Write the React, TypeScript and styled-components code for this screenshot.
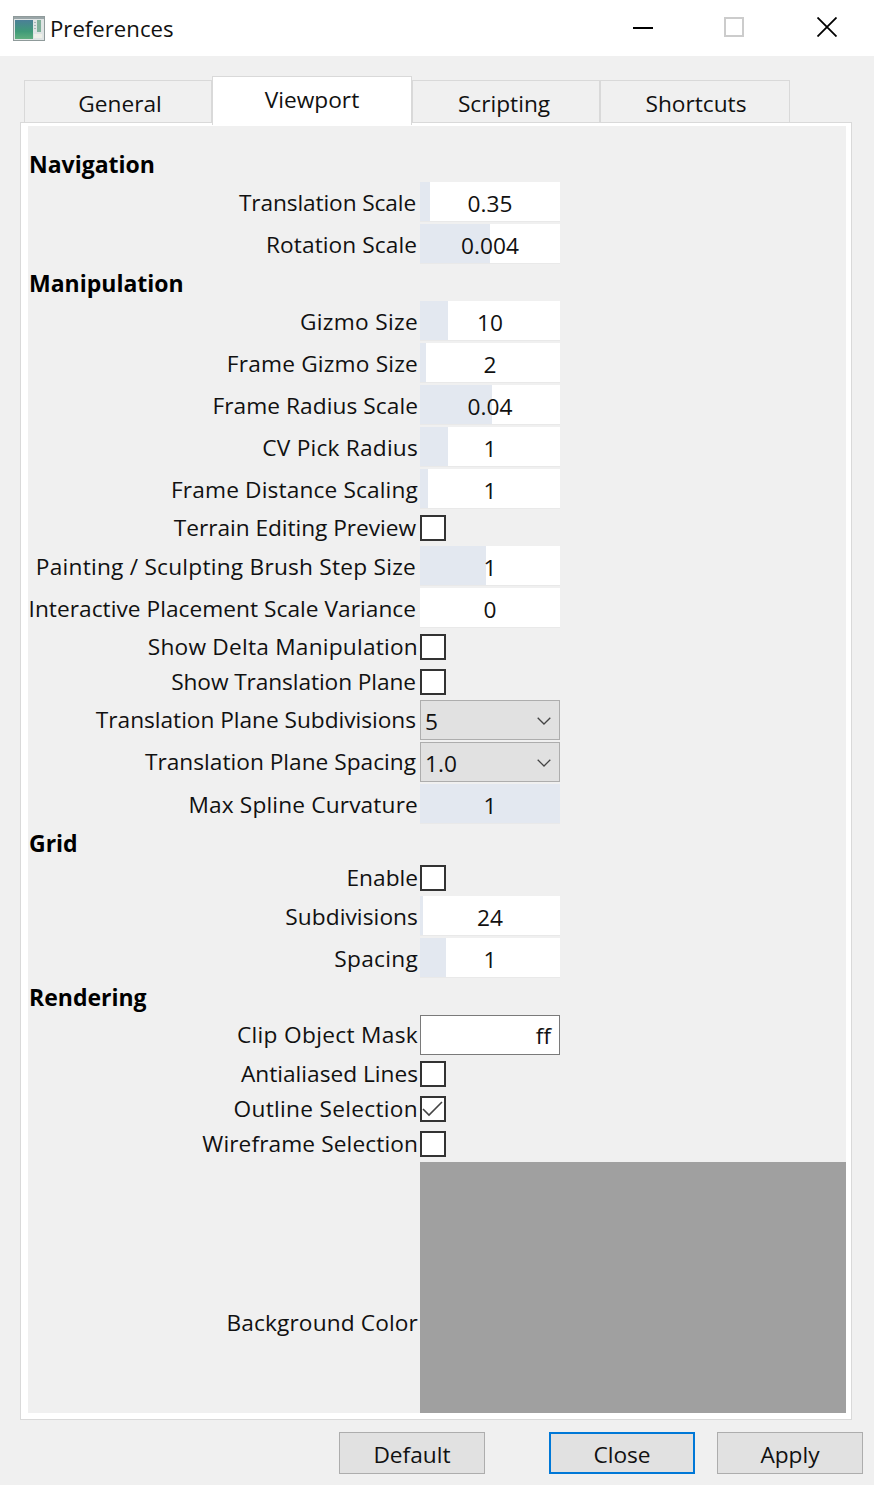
import React from "react";
import styled, { createGlobalStyle } from "styled-components";

const Global = createGlobalStyle`
  html, body { margin: 0; padding: 0; background: #f0f0f0; }
  #root { width: 874px; height: 1485px; overflow: hidden; }
  * { box-sizing: border-box; }
`;

const Window = styled.div`
  width: 874px;
  height: 1485px;
  display: flex;
  flex-direction: column;
  background: #f0f0f0;
  font-family: "Open Sans", "Noto Sans", sans-serif;
  font-size: 22.7px;
  color: #111;
`;

const TitleBar = styled.header`
  height: 56px;
  background: #fff;
  display: flex;
  align-items: center;
  padding-left: 13px;
  flex: none;
`;

const TitleText = styled.span`
  margin-left: 5px;
  font-size: 22.2px;
`;

const WindowControls = styled.div`
  margin-left: auto;
  display: flex;
  margin-right: 37px;
  gap: 71px;
  margin-top: -2px;
`;

const CloseSlot = styled.span`
  display: flex;
  margin-left: 2px;
`;

const TabBar = styled.nav`
  display: flex;
  align-items: flex-end;
  height: 46px;
  margin: 20px 0 0 24px;
  flex: none;
`;

const Tab = styled.div<{ $active?: boolean; $w: number; $shift?: number }>`
  width: ${(p) => p.$w}px;
  height: ${(p) => (p.$active ? 49 : 42)}px;
  margin-bottom: ${(p) => (p.$active ? -3 : 0)}px;
  background: ${(p) => (p.$active ? "#fff" : "#f0f0f0")};
  border: 1px solid #d9d9d9;
  border-bottom: none;
  display: flex;
  align-items: ${(p) => (p.$active ? "flex-start" : "center")};
  justify-content: center;
  padding-top: ${(p) => (p.$active ? 7 : 3)}px;
  padding-left: ${(p) => Math.max(p.$shift ?? 0, 0) * 2}px;
  padding-right: ${(p) => Math.max(-(p.$shift ?? 0), 0) * 2}px;
  position: relative;
  z-index: ${(p) => (p.$active ? 2 : 0)};
`;

const Pane = styled.section`
  margin: 0 22px 0 20px;
  height: 1298px;
  background: #fff;
  border: 1px solid #d9d9d9;
  padding: 3px 5px 6px 7px;
  flex: none;
`;

const Form = styled.div`
  height: 100%;
  background: #f0f0f0;
  padding-top: 21px;
  display: flex;
  flex-direction: column;
  gap: 2px;
`;

const Heading = styled.h3`
  height: 33px;
  margin: 0;
  padding: 2px 0 0 1px;
  font-size: 23px;
  font-weight: 700;
  line-height: 30px;
  color: #000;
`;

const Row = styled.div<{ $h: number }>`
  display: flex;
  align-items: center;
  height: ${(p) => p.$h}px;
  flex: none;
  gap: 2px;
`;

const Label = styled.label<{ $inset?: number; $drop: number; $track?: number }>`
  width: 390px;
  flex: none;
  white-space: nowrap;
  padding-right: ${(p) => p.$inset ?? 0}px;
  margin-top: ${(p) => p.$drop}px;
  letter-spacing: ${(p) => p.$track ?? 0}px;
  display: flex;
  justify-content: flex-end;
`;

const Field = styled.div<{ $fill: number }>`
  width: 140px;
  height: 40px;
  display: flex;
  align-items: center;
  justify-content: center;
  padding-top: 3px;
  border-bottom: 1px solid #e9e9e9;
  background: linear-gradient(
    to right,
    #e3e8f0 ${(p) => p.$fill}px,
    #fff ${(p) => p.$fill}px
  );
`;

const Check = styled.span`
  width: 26px;
  height: 26px;
  border: 2px solid #333;
  background: #fff;
  display: flex;
  align-items: center;
  justify-content: center;
`;

const Combo = styled.div`
  width: 140px;
  height: 40px;
  border: 1px solid #adadad;
  background: #e1e1e1;
  display: flex;
  align-items: center;
  justify-content: space-between;
  padding: 2px 8px 0 4px;
`;

const MaskInput = styled.div`
  width: 140px;
  height: 40px;
  border: 1px solid #7a7a7a;
  background: #fff;
  display: flex;
  align-items: center;
  justify-content: flex-end;
  padding: 0 8px 0 0;
`;

const Swatch = styled.div`
  flex: 1;
  height: 100%;
  background: #a0a0a0;
`;

const Footer = styled.footer`
  display: flex;
  padding: 12px 0 0 339px;
  flex: none;
`;

const Button = styled.button<{ $focused?: boolean; $gap: number }>`
  width: 146px;
  height: 42px;
  margin-left: ${(p) => p.$gap}px;
  background: #e1e1e1;
  border: ${(p) => (p.$focused ? "2px solid #0078d7" : "1px solid #adadad")};
  font: inherit;
  color: #111;
  padding: 2px 0 0;
`;

type Common = { label: string; inset?: number; track?: number };
type Item =
  | { kind: "heading"; text: string }
  | (Common & { kind: "field"; value: string; fill: number })
  | (Common & { kind: "check"; checked?: boolean })
  | (Common & { kind: "combo"; value: string })
  | (Common & { kind: "mask"; value: string })
  | (Common & { kind: "color" });

const items: Item[] = [
  { kind: "heading", text: "Navigation" },
  { kind: "field", label: "Translation Scale", value: "0.35", fill: 10, inset: 2, track: -0.12 },
  { kind: "field", label: "Rotation Scale", value: "0.004", fill: 70, inset: 1, track: 0.07 },
  { kind: "heading", text: "Manipulation" },
  { kind: "field", label: "Gizmo Size", value: "10", fill: 28, track: 0.3 },
  { kind: "field", label: "Frame Gizmo Size", value: "2", fill: 6, track: 0.19 },
  { kind: "field", label: "Frame Radius Scale", value: "0.04", fill: 72, track: 0.06 },
  { kind: "field", label: "CV Pick Radius", value: "1", fill: 28, track: 0.21 },
  { kind: "field", label: "Frame Distance Scaling", value: "1", fill: 8, track: 0.14 },
  { kind: "check", label: "Terrain Editing Preview", inset: 2, track: -0.04 },
  { kind: "field", label: "Painting / Sculpting Brush Step Size", value: "1", fill: 66, inset: 2, track: 0.23 },
  { kind: "field", label: "Interactive Placement Scale Variance", value: "0", fill: 0, inset: 2, track: 0.03 },
  { kind: "check", label: "Show Delta Manipulation", track: 0.22 },
  { kind: "check", label: "Show Translation Plane", inset: 2, track: -0.09 },
  { kind: "combo", label: "Translation Plane Subdivisions", value: "5", inset: 2, track: -0.03 },
  { kind: "combo", label: "Translation Plane Spacing", value: "1.0", inset: 2 },
  { kind: "field", label: "Max Spline Curvature", value: "1", fill: 140, track: 0.15 },
  { kind: "heading", text: "Grid" },
  { kind: "check", label: "Enable" },
  { kind: "field", label: "Subdivisions", value: "24", fill: 3, track: 0.08 },
  { kind: "field", label: "Spacing", value: "1", fill: 26, track: 0.28 },
  { kind: "heading", text: "Rendering" },
  { kind: "mask", label: "Clip Object Mask", value: "ff", track: 0.31 },
  { kind: "check", label: "Antialiased Lines" },
  { kind: "check", label: "Outline Selection", checked: true, track: 0.29 },
  { kind: "check", label: "Wireframe Selection", track: 0.1 },
  { kind: "color", label: "Background Color", track: 0.13 },
];

const AppIcon = () => (
  <svg width="32" height="25" viewBox="0 0 32 25">
    <rect x="0.5" y="0.5" width="31" height="24" fill="#dfe4e4" stroke="#8f9a9a" />
    <rect x="1" y="1" width="30" height="2" fill="#9aa6a8" />
    <defs>
      <linearGradient id="ic" x1="0" y1="0" x2="0" y2="1">
        <stop offset="0" stopColor="#4b7f97" />
        <stop offset="0.6" stopColor="#3f9a78" />
        <stop offset="1" stopColor="#5fae7e" />
      </linearGradient>
    </defs>
    <rect x="2" y="4" width="18" height="19" fill="url(#ic)" />
    <rect x="24" y="4" width="4" height="12" fill="#7fb09a" />
    <rect x="21" y="6" width="2" height="1" fill="#a9b6b6" />
    <rect x="21" y="9" width="2" height="1" fill="#a9b6b6" />
    <rect x="21" y="12" width="2" height="1" fill="#a9b6b6" />
    <rect x="21" y="18" width="8" height="4" fill="#eef0e8" />
  </svg>
);

const Minimize = () => (
  <svg width="20" height="20" viewBox="0 0 20 20">
    <rect x="0" y="10" width="20" height="2" fill="#000" />
  </svg>
);
const Maximize = () => (
  <svg width="20" height="20" viewBox="0 0 20 20">
    <rect x="1" y="1" width="18" height="18" fill="none" stroke="#cccccc" strokeWidth="2" />
  </svg>
);
const CloseIcon = () => (
  <svg width="20" height="20" viewBox="0 0 20 20">
    <path d="M0.5 0.5 L19.5 19.5 M19.5 0.5 L0.5 19.5" stroke="#000" strokeWidth="1.8" fill="none" />
  </svg>
);
const Chevron = () => (
  <svg width="14" height="8" viewBox="0 0 14 8">
    <path d="M0.7 0.7 L7 7 L13.3 0.7" stroke="#444" strokeWidth="1.3" fill="none" />
  </svg>
);
const Tick = () => (
  <svg width="22" height="18" viewBox="0 0 22 18">
    <path d="M1 9 L7 15 L20 2" stroke="#444" strokeWidth="1.6" fill="none" />
  </svg>
);

const control = (item: Exclude<Item, { kind: "heading" }>) => {
  switch (item.kind) {
    case "field":
      return <Field $fill={item.fill}>{item.value}</Field>;
    case "check":
      return <Check>{item.checked && <Tick />}</Check>;
    case "combo":
      return (
        <Combo>
          {item.value}
          <Chevron />
        </Combo>
      );
    case "mask":
      return <MaskInput>{item.value}</MaskInput>;
    case "color":
      return <Swatch />;
  }
};

const rowHeight: Record<string, number> = { field: 40, check: 33, combo: 40, mask: 40, color: 251 };
const labelDrop: Record<string, number> = { field: 1, check: 0, combo: -2, mask: -1, color: 69 };

export default function App() {
  return (
    <Window>
      <Global />
      <TitleBar>
        <AppIcon />
        <TitleText>Preferences</TitleText>
        <WindowControls>
          <Minimize />
          <Maximize />
          <CloseSlot>
            <CloseIcon />
          </CloseSlot>
        </WindowControls>
      </TitleBar>
      <TabBar>
        <Tab $w={188} $shift={2}>General</Tab>
        <Tab $w={200} $active>Viewport</Tab>
        <Tab $w={188} $shift={-2}>Scripting</Tab>
        <Tab $w={190} $shift={1}>Shortcuts</Tab>
      </TabBar>
      <Pane>
        <Form>
          {items.map((item) =>
            item.kind === "heading" ? (
              <Heading key={item.text}>{item.text}</Heading>
            ) : (
              <Row key={item.label} $h={rowHeight[item.kind]}>
                <Label $inset={item.inset} $drop={labelDrop[item.kind]} $track={item.track}>
                  {item.label}
                </Label>
                {control(item)}
              </Row>
            )
          )}
        </Form>
      </Pane>
      <Footer>
        <Button $gap={0}>Default</Button>
        <Button $gap={64} $focused>Close</Button>
        <Button $gap={22}>Apply</Button>
      </Footer>
    </Window>
  );
}
